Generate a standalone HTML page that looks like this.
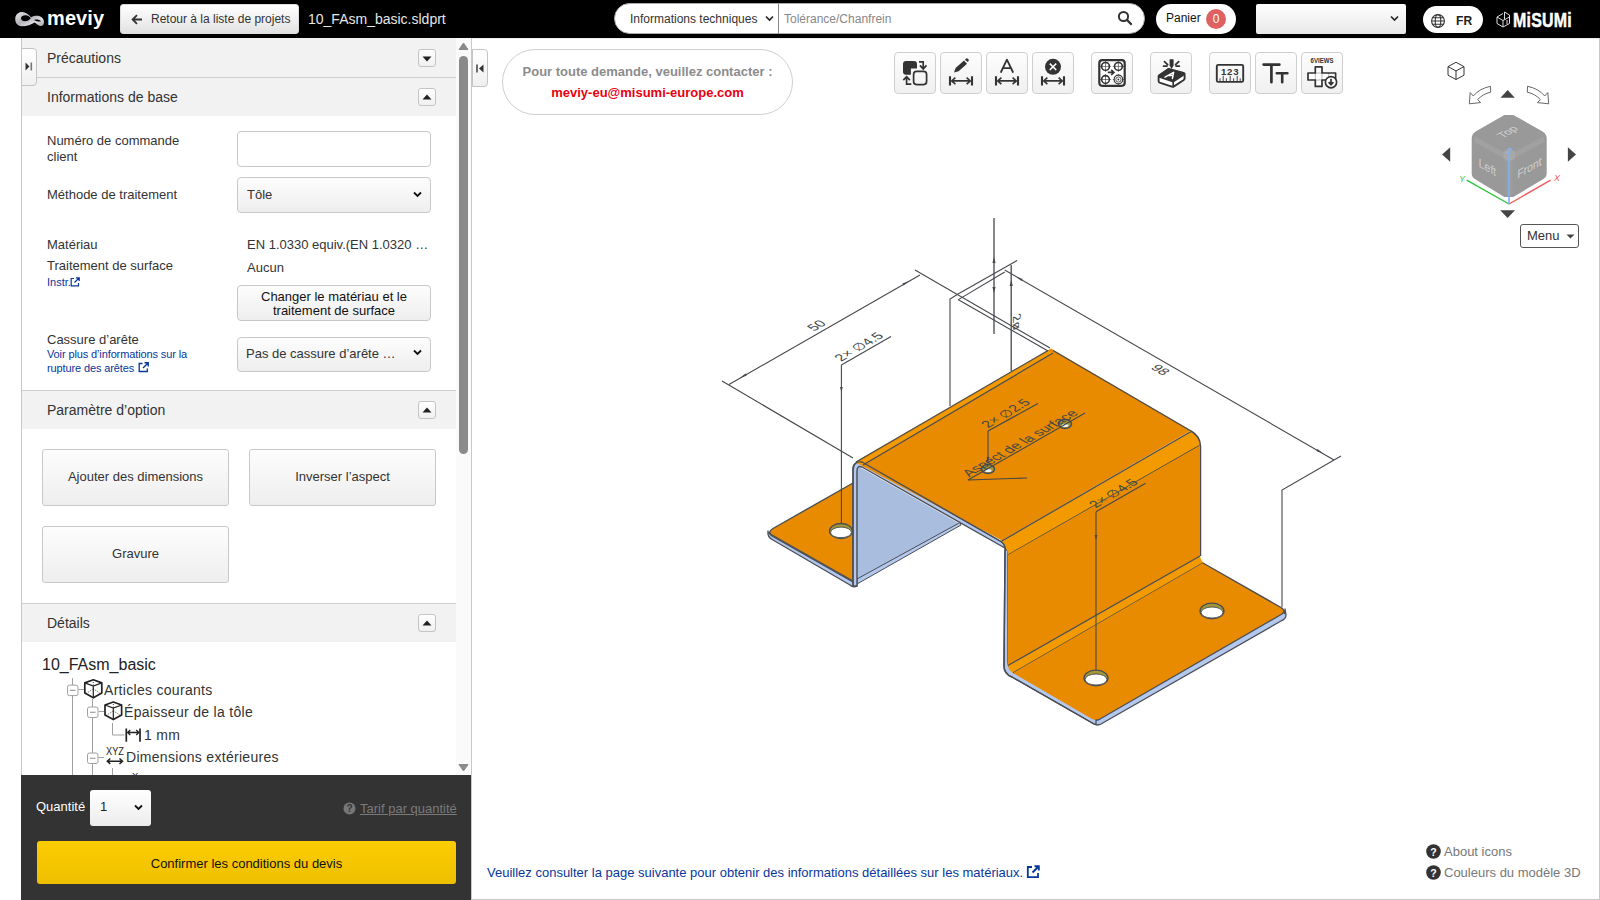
<!DOCTYPE html>
<html lang="fr">
<head>
<meta charset="utf-8">
<title>meviy</title>
<style>
*{box-sizing:border-box;margin:0;padding:0}
html,body{width:1600px;height:900px;overflow:hidden;background:#fff;font-family:"Liberation Sans",sans-serif;color:#333}
.a{position:absolute;white-space:nowrap}
#hdr{position:absolute;left:0;top:0;width:1600px;height:38px;background:#000}
.btn{position:absolute;border:1px solid #c8c8c8;border-radius:3px;background:linear-gradient(#fdfdfd,#eeeeee)}
.sec{position:absolute;left:22px;width:434px;background:#f2f2f2}
.tog{position:absolute;left:418px;width:18px;height:18px;border:1px solid #c4c4c4;border-radius:3px;background:linear-gradient(#ffffff,#f0f0f0)}
.t13{font-size:13px;line-height:16px;margin-top:1px}
.t14{font-size:14px;line-height:16px}
.t12{font-size:12px;line-height:14px}
.t11{font-size:11px;line-height:14px}
.blue{color:#08379c}
.tb{position:absolute;top:52px;width:42px;height:42px;border:1px solid #cfcfcf;border-radius:4px;background:linear-gradient(#fdfdfd,#f0f0f0)}
.tb svg{position:absolute;left:-1px;top:-1px}
</style>
</head>
<body>
<!-- HEADER -->
<div id="hdr">
  <svg class="a" style="left:0;top:0" width="50" height="38" viewBox="0 0 50 38">
    <defs><linearGradient id="lg" x1="0" y1="0" x2="1" y2="1"><stop offset="0" stop-color="#e8e8ec"/><stop offset=".45" stop-color="#b4b2b8"/><stop offset=".7" stop-color="#dcdce2"/><stop offset="1" stop-color="#a8a6ac"/></linearGradient></defs>
    <path fill-rule="evenodd" fill="url(#lg)" d="M15.2 19 C15.2 14.5 18.8 12 22 12 C25.5 12 28.8 14.5 31 17.3 C33 16.2 35 15.8 37 15.8 C41 15.8 44 18.5 44 22 C44 24.6 42.6 26 41 26 C39 26 37 24.2 34.6 22.4 C31 24.4 27 26.2 22 26.2 C18 26.2 15.2 23.5 15.2 19 Z M21 18.3 C21 16.3 23 15.3 25.5 15.3 C28 15.3 29.8 16.8 30.8 18.6 C29 20.3 27.5 21.2 25.2 21.2 C22.8 21.2 21 20.2 21 18.3 Z M34 19.9 C36.8 19.2 39.8 19.6 41 21.4 C39.4 21.9 36.8 21.6 34 19.9 Z"/>
  </svg>
  <div class="a" style="left:47px;top:6px;font-size:20px;line-height:24px;font-weight:700;color:#fff;letter-spacing:0.1px">meviy</div>
  <div class="btn" style="left:120px;top:4px;width:179px;height:30px;border-color:#ddd;border-radius:3px;background:linear-gradient(#ffffff,#e2e2e2)">
    <svg class="a" style="left:10px;top:9px" width="12" height="11" viewBox="0 0 12 11"><path d="M11 5.5H2M6 1.2 1.6 5.5 6 9.8" fill="none" stroke="#333" stroke-width="1.8"/></svg>
    <div class="a t12" style="left:30px;top:7px;color:#333">Retour à la liste de projets</div>
  </div>
  <div class="a" style="left:308px;top:11px;font-size:14px;line-height:16px;color:#e6e6e6">10_FAsm_basic.sldprt</div>
  <!-- search -->
  <div class="a" style="left:614px;top:3px;width:531px;height:31px;background:#fff;border-radius:16px;border:1px solid #aaa"></div>
  <div class="a t12" style="left:630px;top:12px;color:#333">Informations techniques</div>
  <svg class="a" style="left:765px;top:15px" width="9" height="7" viewBox="0 0 9 7"><path d="M1 1.5 4.5 5 8 1.5" fill="none" stroke="#222" stroke-width="1.6"/></svg>
  <div class="a" style="left:778px;top:4px;width:1px;height:30px;background:#888"></div>
  <div class="a t12" style="left:784px;top:12px;color:#888">Tolérance/Chanfrein</div>
  <svg class="a" style="left:1117px;top:10px" width="16" height="16" viewBox="0 0 16 16"><circle cx="6.5" cy="6.5" r="4.6" fill="none" stroke="#333" stroke-width="2"/><path d="M10 10 14 14" stroke="#333" stroke-width="2.4" stroke-linecap="round"/></svg>
  <!-- panier -->
  <div class="a" style="left:1156px;top:4px;width:80px;height:30px;background:#fff;border-radius:15px"></div>
  <div class="a t12" style="left:1166px;top:11px;color:#111">Panier</div>
  <div class="a" style="left:1206px;top:9px;width:20px;height:20px;border-radius:10px;background:#e06162;color:#fff;font-size:12px;line-height:20px;text-align:center">0</div>
  <!-- select -->
  <div class="a" style="left:1256px;top:4px;width:150px;height:30px;border-radius:2px;background:linear-gradient(#ffffff,#e8e8e8)"></div>
  <svg class="a" style="left:1390px;top:15px" width="9" height="7" viewBox="0 0 9 7"><path d="M1 1.5 4.5 5 8 1.5" fill="none" stroke="#222" stroke-width="1.6"/></svg>
  <!-- FR -->
  <div class="a" style="left:1423px;top:6px;width:60px;height:27px;background:#fff;border-radius:14px"></div>
  <svg class="a" style="left:1430px;top:13px" width="16" height="16" viewBox="0 0 16 16"><g fill="none" stroke="#333" stroke-width="1.1"><circle cx="8" cy="8" r="6.4"/><ellipse cx="8" cy="8" rx="2.8" ry="6.4"/><path d="M1.6 8h12.8M2.6 4.8h10.8M2.6 11.2h10.8"/></g></svg>
  <div class="a" style="left:1456px;top:14px;font-size:12px;line-height:14px;font-weight:700;color:#222;letter-spacing:0.2px">FR</div>
  <!-- misumi -->
  <svg class="a" style="left:1496px;top:11px" width="15" height="17" viewBox="0 0 15 17"><g fill="none" stroke="#ddd" stroke-width="1"><path d="M1 6 7 9.5 7 16 1 12.5Z M7 9.5 13.5 6 13.5 12.5 7 16 M1 6 7 2.5 M8.5 1 13.5 4 13.5 6 M8.5 1 8.5 8.5 M11 9 11 13"/></g></svg>
  <div class="a" style="left:1513px;top:8px;font-size:21px;line-height:24px;font-weight:700;color:#fff;transform:scaleX(0.76);transform-origin:0 0;letter-spacing:0.3px;-webkit-text-stroke:0.5px #fff">MiSUMi</div>
</div>

<!-- LEFT PANEL -->
<div class="a" style="left:21px;top:38px;width:1px;height:737px;background:#c8c8c8"></div>
<div class="a" style="left:456px;top:38px;width:15px;height:737px;background:#fafafa"></div>
<div class="a" style="left:471px;top:38px;width:1px;height:862px;background:#c8c8c8"></div>
<!-- scrollbar -->
<svg class="a" style="left:458px;top:42px" width="11" height="8" viewBox="0 0 11 8"><path d="M1 7.5 5.5 1 10 7.5Z" fill="#8a8a8a" stroke="#8a8a8a" stroke-linejoin="round"/></svg>
<div class="a" style="left:459px;top:56px;width:9px;height:398px;border-radius:4.5px;background:#8a8a8a"></div>
<svg class="a" style="left:458px;top:764px" width="11" height="8" viewBox="0 0 11 8"><path d="M1 0.5 5.5 7 10 0.5Z" fill="#8a8a8a" stroke="#8a8a8a" stroke-linejoin="round"/></svg>

<!-- sections -->
<div class="sec" style="top:38px;height:40px;border-bottom:1px solid #cfcfcf"></div>
<div class="a t14" style="left:47px;top:50px;color:#333">Précautions</div>
<div class="tog" style="top:49px"><svg class="a" style="left:3px;top:6px" width="10" height="6" viewBox="0 0 10 6"><path d="M0.5 0.5H9.5L5 5.5Z" fill="#222"/></svg></div>

<div class="sec" style="top:78px;height:38px"></div>
<div class="a t14" style="left:47px;top:89px;color:#333">Informations de base</div>
<div class="tog" style="top:88px"><svg class="a" style="left:3px;top:5px" width="10" height="6" viewBox="0 0 10 6"><path d="M0.5 5.5H9.5L5 0.5Z" fill="#222"/></svg></div>

<div class="a t13" style="left:47px;top:132px;color:#333;line-height:16px">Numéro de commande<br>client</div>
<div class="a" style="left:237px;top:131px;width:194px;height:36px;border:1px solid #c8c8c8;border-radius:4px;background:#fff"></div>

<div class="a t13" style="left:47px;top:186px;color:#333">Méthode de traitement</div>
<div class="btn" style="left:237px;top:177px;width:194px;height:36px;border-radius:4px"></div>
<div class="a t13" style="left:247px;top:186px;color:#333">Tôle</div>
<svg class="a" style="left:413px;top:191px" width="9" height="7" viewBox="0 0 9 7"><path d="M1 1.5 4.5 5 8 1.5" fill="none" stroke="#111" stroke-width="1.8"/></svg>

<div class="a t13" style="left:47px;top:236px;color:#333">Matériau</div>
<div class="a t13" style="left:247px;top:236px;color:#333">EN 1.0330 equiv.(EN 1.0320 …</div>
<div class="a t13" style="left:47px;top:257px;color:#333">Traitement de surface</div>
<div class="a t13" style="left:247px;top:259px;color:#333">Aucun</div>
<div class="a t11 blue" style="left:47px;top:275px">Instr.</div>
<svg class="a" style="left:70px;top:277px" width="10" height="10" viewBox="0 0 10 10"><path d="M4 1.5H1.2V8.8H8.5V6" fill="none" stroke="#08379c" stroke-width="1.2"/><path d="M4.5 5.5 9 1M6 0.8H9.2V4" fill="none" stroke="#08379c" stroke-width="1.3"/></svg>

<div class="btn" style="left:237px;top:285px;width:194px;height:36px;border-radius:4px"></div>
<div class="a t13" style="left:237px;top:289px;width:194px;text-align:center;color:#111;line-height:14px">Changer le matériau et le<br>traitement de surface</div>

<div class="a t13" style="left:47px;top:331px;color:#333">Cassure d’arête</div>
<div class="a t11 blue" style="left:47px;top:347px;line-height:14px;letter-spacing:-0.12px">Voir plus d’informations sur la<br>rupture des arêtes</div>
<svg class="a" style="left:138px;top:362px" width="11" height="11" viewBox="0 0 11 11"><path d="M4.5 1.5H1.2V9.5H9.3V6.5" fill="none" stroke="#08379c" stroke-width="1.3"/><path d="M5 6 9.8 1.2M6.5 0.8H10.2V4.5" fill="none" stroke="#08379c" stroke-width="1.4"/></svg>
<div class="btn" style="left:237px;top:337px;width:194px;height:35px;border-radius:4px"></div>
<div class="a t13" style="left:246px;top:345px;color:#333">Pas de cassure d’arête …</div>
<svg class="a" style="left:413px;top:349px" width="9" height="7" viewBox="0 0 9 7"><path d="M1 1.5 4.5 5 8 1.5" fill="none" stroke="#111" stroke-width="1.8"/></svg>

<div class="sec" style="top:390px;height:39px;border-top:1px solid #cfcfcf"></div>
<div class="a t14" style="left:47px;top:402px;color:#333">Paramètre d’option</div>
<div class="tog" style="top:401px"><svg class="a" style="left:3px;top:5px" width="10" height="6" viewBox="0 0 10 6"><path d="M0.5 5.5H9.5L5 0.5Z" fill="#222"/></svg></div>

<div class="btn" style="left:42px;top:449px;width:187px;height:57px"></div>
<div class="a t13" style="left:42px;top:468px;width:187px;text-align:center;color:#333">Ajouter des dimensions</div>
<div class="btn" style="left:249px;top:449px;width:187px;height:57px"></div>
<div class="a t13" style="left:249px;top:468px;width:187px;text-align:center;color:#333">Inverser l’aspect</div>
<div class="btn" style="left:42px;top:526px;width:187px;height:57px"></div>
<div class="a t13" style="left:42px;top:545px;width:187px;text-align:center;color:#333">Gravure</div>

<div class="sec" style="top:603px;height:39px;border-top:1px solid #cfcfcf"></div>
<div class="a t14" style="left:47px;top:615px;color:#333">Détails</div>
<div class="tog" style="top:614px"><svg class="a" style="left:3px;top:5px" width="10" height="6" viewBox="0 0 10 6"><path d="M0.5 5.5H9.5L5 0.5Z" fill="#222"/></svg></div>

<div class="a" style="left:42px;top:656px;font-size:16px;line-height:18px;color:#222">10_FAsm_basic</div>
<!-- TREE placeholder -->
<!--TREE--><svg class="a" style="left:40px;top:674px" width="300" height="101" viewBox="40 674 300 101">
<path d="M72.5 678 V775 M92.5 699 V775 M112.5 723 V735 H124.5 M112.5 768 V775" fill="none" stroke="#a0a0a0" stroke-width="1"/>
<rect x="67.5" y="685.1" width="10.5" height="10.5" rx="2" fill="#fff" stroke="#a0a0a0" stroke-width="1"/>
<path d="M70 690.4 H75.5" stroke="#a0a0a0" stroke-width="1.2"/>
<path d="M78.5 689.5 H84" stroke="#a0a0a0" stroke-width="1"/>
<rect x="87.5" y="707.0" width="10.5" height="10.5" rx="2" fill="#fff" stroke="#a0a0a0" stroke-width="1"/>
<path d="M90 712.3 H95.5" stroke="#a0a0a0" stroke-width="1.2"/>
<path d="M98.5 711.5 H104" stroke="#a0a0a0" stroke-width="1"/>
<rect x="87.5" y="753.0" width="10.5" height="10.5" rx="2" fill="#fff" stroke="#a0a0a0" stroke-width="1"/>
<path d="M90 758.3 H95.5" stroke="#a0a0a0" stroke-width="1.2"/>
<path d="M98.5 757.5 H104" stroke="#a0a0a0" stroke-width="1"/>
<path d="M93.3 679.8 L101.8 682.92 V693.112 L93.3 697.8000000000001 L84.8 693.112 V682.92 Z" fill="#fff" stroke="#222" stroke-width="1.7" stroke-linejoin="round"/>
<path d="M84.8 682.92 L93.3 686.056 L101.8 682.92 M93.3 686.056 V697.8000000000001" fill="none" stroke="#222" stroke-width="1.2"/>
<path d="M93.3 685.468 V680.568 M93.3 688.8 L86.2 693.504 M93.3 688.8 L100.39999999999999 693.504" fill="none" stroke="#222" stroke-width="0.9" stroke-dasharray="1 1.5"/>
<path d="M113.31400000000001 702.0 L121.628 705.0416 V715.02976 L113.31400000000001 719.6080000000001 L105.0 715.02976 V705.0416 Z" fill="#fff" stroke="#222" stroke-width="1.7" stroke-linejoin="round"/>
<path d="M105.0 705.0416 L113.31400000000001 708.1148800000001 L121.628 705.0416 M113.31400000000001 708.1148800000001 V719.6080000000001" fill="none" stroke="#222" stroke-width="1.2"/>
<path d="M113.31400000000001 707.5386400000001 V702.7366400000001 M113.31400000000001 710.8040000000001 L106.4 715.4139200000001 M113.31400000000001 710.8040000000001 L120.228 715.4139200000001" fill="none" stroke="#222" stroke-width="0.9" stroke-dasharray="1 1.5"/>
<path d="M126.3 728.5 V741.8 M140 728.5 V741.8" stroke="#222" stroke-width="1.7"/>
<path d="M127.5 732.5 H139 M130.3 730 127.6 732.5 130.3 735 M136.2 730 138.9 732.5 136.2 735" fill="none" stroke="#222" stroke-width="1.3"/>
<text x="115" y="755.2" font-family="Liberation Sans" font-size="10" fill="#222" text-anchor="middle" transform="translate(115 0) scale(0.92 1) translate(-115 0)">XYZ</text>
<path d="M107.5 761.2 H122.3 M110.3 758.5 107.3 761.2 110.3 763.9 M119.5 758.5 122.5 761.2 119.5 763.9" fill="none" stroke="#222" stroke-width="1.5"/>
<text x="132" y="779" font-family="Liberation Sans" font-size="9.5" fill="#222">X</text>
</svg>
<div class="a" style="left:104px;top:682px;font-size:14px;line-height:16px;color:#333;letter-spacing:0.3px">Articles courants</div>
<div class="a" style="left:124px;top:704px;font-size:14px;line-height:16px;color:#333;letter-spacing:0.3px">Épaisseur de la tôle</div>
<div class="a" style="left:144px;top:727px;font-size:14px;line-height:16px;color:#333;letter-spacing:0.3px">1 mm</div>
<div class="a" style="left:126px;top:749px;font-size:14px;line-height:16px;color:#333;letter-spacing:0.3px">Dimensions extérieures</div><!--/TREE-->

<!-- collapse tabs -->
<div class="a" style="left:21px;top:48px;width:16px;height:38px;border:1px solid #c4c4c4;border-radius:0 4px 4px 0;background:linear-gradient(#ffffff,#f0f0f0)"></div>
<svg class="a" style="left:25px;top:62px" width="8" height="9" viewBox="0 0 8 9"><path d="M0.5 0.5 4.5 4.5 0.5 8.5Z" fill="#333"/><rect x="5.5" y="0.5" width="1.6" height="8" fill="#777"/></svg>
<div class="a" style="left:472px;top:49px;width:16px;height:38px;border:1px solid #c4c4c4;border-radius:0 4px 4px 0;background:linear-gradient(#ffffff,#f0f0f0)"></div>
<svg class="a" style="left:476px;top:64px" width="8" height="9" viewBox="0 0 8 9"><rect x="0.3" y="0.5" width="1.4" height="8" fill="#333"/><path d="M7.5 0.5 3 4.5 7.5 8.5Z" fill="#333"/></svg>

<!-- FOOTER -->
<div class="a" style="left:21px;top:775px;width:450px;height:125px;background:#333"></div>
<div class="a t13" style="left:36px;top:798px;color:#fff">Quantité</div>
<div class="a" style="left:90px;top:790px;width:61px;height:36px;border-radius:3px;background:linear-gradient(#ffffff,#ececec)"></div>
<div class="a t13" style="left:100px;top:798px;color:#222">1</div>
<svg class="a" style="left:134px;top:804px" width="9" height="7" viewBox="0 0 9 7"><path d="M1 1.5 4.5 5 8 1.5" fill="none" stroke="#111" stroke-width="1.8"/></svg>
<svg class="a" style="left:343px;top:802px" width="13" height="13" viewBox="0 0 13 13"><circle cx="6.5" cy="6.5" r="6" fill="#777"/><text x="6.5" y="10.3" font-family="Liberation Sans" font-weight="700" font-size="10" fill="#333" text-anchor="middle">?</text></svg>
<div class="a t13" style="left:360px;top:800px;color:#7a7a7a;text-decoration:underline">Tarif par quantité</div>
<div class="a" style="left:37px;top:841px;width:419px;height:43px;border-radius:3px;background:linear-gradient(#fccd00,#eebf00)"></div>
<div class="a t13" style="left:37px;top:855px;width:419px;text-align:center;color:#111">Confirmer les conditions du devis</div>

<!-- VIEWER -->
<div class="a" style="left:472px;top:38px;width:1127px;height:1px;background:#ececec"></div>
<div class="a" style="left:1599px;top:38px;width:1px;height:862px;background:#c8c8c8"></div>
<div class="a" style="left:471px;top:899px;width:1129px;height:1px;background:#c8c8c8"></div>

<div class="a" style="left:502px;top:49px;width:291px;height:66px;border:1px solid #cfcfcf;border-radius:33px;background:#fff"></div>
<div class="a t13" style="left:502px;top:63px;width:291px;text-align:center;font-weight:700;color:#8c8c8c">Pour toute demande, veuillez contacter :</div>
<div class="a t13" style="left:502px;top:84px;width:291px;text-align:center;font-weight:700;color:#e8000f">meviy-eu@misumi-europe.com</div>

<!--TOOLBAR--><div class="tb" style="left:894px"><svg width="41" height="41" viewBox="0 0 41 41">
<path d="M12 9 H20 Q23 9 23 12 V16.6 H16.9 V22.7 H12 Q9 22.7 9 19.7 V12 Q9 9 12 9Z" fill="#333"/>
<rect x="19.6" y="19.4" width="13" height="13.2" rx="3" fill="none" stroke="#333" stroke-width="1.7"/>
<path d="M25 9.9 H29.2 V16.5 M25.9 13.4 29.2 16.9 32.5 13.4" fill="none" stroke="#333" stroke-width="1.7"/>
<path d="M17.3 32.1 H12.6 V25 M9.3 28.2 12.6 24.8 15.9 28.2" fill="none" stroke="#333" stroke-width="1.7"/>
</svg></div>
<div class="tb" style="left:940px"><svg width="41" height="41" viewBox="0 0 41 41">
<path d="M14 20.6 L15.6 16 L24 8.6 L27 11.7 L18.6 19.2 Z" fill="#333"/>
<path d="M24.9 7.8 L26.2 6.6 Q27 5.9 27.8 6.7 L28.6 7.5 Q29.3 8.3 28.5 9.1 L27.8 9.9 Z" fill="#333"/>
<path d="M10 24.3 V33.6 M32 24.3 V33.6" stroke="#333" stroke-width="2.1"/>
<path d="M11.5 28.9 H30.5 M15.4 25.6 11.7 28.9 15.4 32.2 M26.6 25.6 30.3 28.9 26.6 32.2" fill="none" stroke="#333" stroke-width="1.6"/></svg></div>
<div class="tb" style="left:986px"><svg width="41" height="41" viewBox="0 0 41 41">
<path d="M15 20 L20.9 7.6 L26.9 20 M17.6 16.2 H24.2" fill="none" stroke="#333" stroke-width="1.8" stroke-linecap="round" stroke-linejoin="round"/>
<path d="M10 24.3 V33.6 M32 24.3 V33.6" stroke="#333" stroke-width="2.1"/>
<path d="M11.5 28.9 H30.5 M15.4 25.6 11.7 28.9 15.4 32.2 M26.6 25.6 30.3 28.9 26.6 32.2" fill="none" stroke="#333" stroke-width="1.6"/></svg></div>
<div class="tb" style="left:1032px"><svg width="41" height="41" viewBox="0 0 41 41">
<circle cx="21" cy="14.8" r="8" fill="#333"/>
<path d="M17.8 11.6 24.2 18 M24.2 11.6 17.8 18" stroke="#fff" stroke-width="1.5"/>
<path d="M10 24.3 V33.6 M32 24.3 V33.6" stroke="#333" stroke-width="2.1"/>
<path d="M11.5 28.9 H30.5 M15.4 25.6 11.7 28.9 15.4 32.2 M26.6 25.6 30.3 28.9 26.6 32.2" fill="none" stroke="#333" stroke-width="1.6"/></svg></div>
<div class="tb" style="left:1091px"><svg width="41" height="41" viewBox="0 0 41 41">
<rect x="8.3" y="8.2" width="25.4" height="25.6" rx="3" fill="#fff" stroke="#333" stroke-width="2.2"/>
<circle cx="14.5" cy="14.4" r="3.9" fill="#fff" stroke="#333" stroke-width="1.6"/><path d="M8.9 14.4H20.1M14.5 8.8V20.0" stroke="#333" stroke-width="0.6"/><circle cx="27.4" cy="14.4" r="3.9" fill="#fff" stroke="#333" stroke-width="1.6"/><path d="M21.799999999999997 14.4H33.0M27.4 8.8V20.0" stroke="#333" stroke-width="0.6"/><circle cx="14.5" cy="27.5" r="3.9" fill="#fff" stroke="#333" stroke-width="1.6"/><path d="M8.9 27.5H20.1M14.5 21.9V33.1" stroke="#333" stroke-width="0.6"/><circle cx="27.4" cy="27.5" r="4.3" fill="#fff" stroke="#333" stroke-width="1.2"/><circle cx="27.4" cy="27.5" r="2.6" fill="none" stroke="#333" stroke-width="0.8"/><circle cx="27.4" cy="27.5" r="0.9" fill="#333"/><path d="M21.799999999999997 27.5H23.099999999999998M31.7 27.5H33.0M27.4 21.9V23.2M27.4 31.8V33.1" stroke="#333" stroke-width="0.6"/>
<path d="M16.8 20.4 H22.6 M20.2 17.9 22.9 20.4 20.2 23" fill="none" stroke="#333" stroke-width="1.7"/>
</svg></div>
<div class="tb" style="left:1150px"><svg width="41" height="41" viewBox="0 0 41 41">
<path d="M9 23.5 L18.5 17 L33.5 21 Q35 21.6 34.6 23 V26.5 Q34.4 27.6 33.4 28.3 L24 34.4 Q23 35 21.8 34.7 L9.6 30.6 Q8.6 30.2 8.6 29 V24.5 Q8.6 23.8 9 23.5Z" fill="#fff" stroke="#333" stroke-width="1.9" stroke-linejoin="round"/>
<path d="M8.8 23.7 L18.5 17 L33.8 21.2 Q34.8 21.8 34 22.6 L24.2 29 Q23 29.6 21.8 29.2 L9.4 25 Q8.4 24.5 8.8 23.7Z" fill="#333" stroke="#333" stroke-width="1.6" stroke-linejoin="round"/>
<path d="M23.2 29.3 V34.5" stroke="#333" stroke-width="1.7"/>
<path d="M15 25.2 L23.6 20.3 L22.4 26.4 M18.6 23.6 L23 23.3" fill="none" stroke="#fff" stroke-width="1.5" stroke-linejoin="round" stroke-linecap="round"/>
<path d="M19.6 7.2 H23.6 V13.5 L21.6 17 L19.6 13.5Z" fill="#333"/>
<path d="M14.5 9.6 L17.6 12.6 M13.6 14.2 H16.8 M28.7 9.6 L25.6 12.6 M29.3 14.2 H26.2" stroke="#333" stroke-width="1.8" stroke-linecap="round"/>
</svg></div>
<div class="tb" style="left:1209px"><svg width="41" height="41" viewBox="0 0 41 41">
<rect x="7.8" y="12.9" width="26.4" height="17" rx="1.5" fill="none" stroke="#333" stroke-width="1.9"/>
<text x="21.2" y="22.8" font-family="Liberation Sans" font-weight="700" font-size="9.6" fill="#333" text-anchor="middle" letter-spacing="0.8">123</text>
<path d="M11 29 V26.3 M14.2 29 V23.8 M17.4 29 V26.3 M21.2 29 V23.8 M24.6 29 V26.3 M28.2 29 V23.8 M31.2 29 V26.3" stroke="#333" stroke-width="0.9"/>
</svg></div>
<div class="tb" style="left:1255px"><svg width="41" height="41" viewBox="0 0 41 41">
<path d="M8.6 12.6 H24.4 M16.4 12.8 V30.2" stroke="#333" stroke-width="2.7" stroke-linecap="round"/>
<path d="M21.8 21.3 H32.4 M27.2 21.5 V30.2" stroke="#333" stroke-width="2.6" stroke-linecap="round"/>
</svg></div>
<div class="tb" style="left:1301px"><svg width="41" height="41" viewBox="0 0 41 41">
<text x="21" y="11.4" font-family="Liberation Sans" font-weight="700" font-size="6.6" fill="#333" text-anchor="middle" transform="translate(21 0) scale(0.92 1) translate(-21 0)">6VIEWS</text>
<path d="M14.3 14.8 H21 V21 H34.6 V28 H21 V34.4 H14.3 V28 H7 V21 H14.3 Z" fill="#fff" stroke="#333" stroke-width="1.7" stroke-linejoin="round"/>
<path d="M14.3 21 V28 M21 21 V28 M14.3 21 H21 M14.3 28 H21 M27.8 21 V28" stroke="#333" stroke-width="0.5" opacity="0.7"/>
<circle cx="30" cy="30.2" r="5.6" fill="#fff" stroke="#333" stroke-width="1.7"/>
<path d="M30 26.8 V32.4 M27.6 30.2 30 32.7 32.4 30.2" fill="none" stroke="#333" stroke-width="1.7"/>
</svg></div><!--/TOOLBAR-->
<!--MODEL--><svg class="a" style="left:0;top:0" width="1600" height="900" viewBox="0 0 1600 900">
<path d="M853 483 L773 528.5 Q767 532 772 536 L853 582 Z" fill="#e98b00"/>
<path d="M768 531 Q767 537 773 540 L850 585 Q853 588 857 586 L857 580 L853 581 L772 535 Q767 532 768 531Z" fill="#b4c8ee" stroke="#4b4e54" stroke-width="1.3" stroke-linejoin="round"/>
<path d="M853 483 L773 528.5 Q767 532 772 536 L853 582" fill="none" stroke="#4b4e54" stroke-width="1.4"/>
<path d="M856 465 L961 524.5 L856 581 Z" fill="#a9bddf"/>
<path d="M857 579 L960 522.5 L961 525 L857 584 Z" fill="#b4c8ee" stroke="#4b4e54" stroke-width="1" stroke-linejoin="round"/>
<path d="M853 586 L853 470 Q853 461 862 462 L1001 541.5 Q1006 545 1005 551 L1004 666 Q1004 674 1012 677 L1094 724 Q1097 725.5 1100 724 L1100 719 L1096 719 L1013 671 Q1008 668 1008 662 L1008 553 Q1008 550 1004 547.5 L862 467 Q857 465 857 471 L857 586 Z" fill="#b4c8ee" stroke="#4b4e54" stroke-width="1.4" stroke-linejoin="round"/>
<path d="M855 462 L1051 348.5 L1191 430.5 L1002 540.5 Z" fill="#e98b00"/>
<path d="M857 463 L1049 351 L1054 353.5 L863 465 Z" fill="#f39a00"/>
<path d="M856 462 L1048 350.5" stroke="#4b4e54" stroke-width="1.2" fill="none"/>
<path d="M863 465 L1053 353" stroke="#4b4e54" stroke-width="1.3" fill="none"/>
<path d="M1053 350.5 L1191 431" stroke="#4b4e54" stroke-width="1.4" fill="none"/>
<path d="M1001 541.5 L1191 431 Q1200 436 1200 445 L1200 446 L1008 555 Q1007 546 1001 541.5Z" fill="#f39a00"/>
<path d="M1001 541.5 L1191 431.5" stroke="#4b4e54" stroke-width="1.3" fill="none"/>
<path d="M1008 555 L1199.5 445.5" stroke="#4b4e54" stroke-width="1.3" fill="none"/>
<path d="M1191 431 Q1200 436 1200.5 446 L1200.5 556" stroke="#4b4e54" stroke-width="1.5" fill="none"/>
<path d="M1008 555 L1200 445.5 L1200 556 L1008 666 Z" fill="#e98b00"/>
<path d="M1008 666 L1200 556 Q1201 561 1204 563 L1013 673 Q1009 671 1008 666Z" fill="#f39a00"/>
<path d="M1008 665.5 L1200 556" stroke="#4b4e54" stroke-width="1.3" fill="none"/>
<path d="M1013 673 L1203 563" stroke="#4b4e54" stroke-width="1.3" fill="none"/>
<path d="M1013 673 L1203 563 L1281 607.5 Q1286 611 1282 614 L1100 719 Q1096 721 1092 719 Z" fill="#e98b00"/>
<path d="M1100 719 L1282 614 Q1286 611 1285 609 L1286 615 Q1286 619 1281 621 L1101 724 Q1098 725.5 1096 724.5 L1096 720 Q1098 720.5 1100 719Z" fill="#b4c8ee" stroke="#4b4e54" stroke-width="1.3" stroke-linejoin="round"/>
<path d="M1203 563 L1281 607.5 Q1286 611 1284 614" stroke="#4b4e54" stroke-width="1.4" fill="none"/>
<path d="M853 586 L853 470 Q853 461 862 462 L1001 541.5 Q1006 545 1005 551 L1004 666 Q1004 674 1012 677 L1094 724" fill="none" stroke="#4b4e54" stroke-width="1.4" stroke-linejoin="round"/>
<ellipse cx="841" cy="531" rx="11.5" ry="7.5" fill="#a39634" stroke="#4b4e54" stroke-width="1.3"/>
<ellipse cx="841" cy="532.40" rx="10.40" ry="5.30" fill="#fff" stroke="#4b4e54" stroke-width="0.9"/>
<ellipse cx="1212" cy="611" rx="12" ry="7.8" fill="#a39634" stroke="#4b4e54" stroke-width="1.3"/>
<ellipse cx="1212" cy="612.50" rx="10.90" ry="5.50" fill="#fff" stroke="#4b4e54" stroke-width="0.9"/>
<ellipse cx="1096" cy="678" rx="12" ry="7.8" fill="#a39634" stroke="#4b4e54" stroke-width="1.3"/>
<ellipse cx="1096" cy="679.50" rx="10.90" ry="5.50" fill="#fff" stroke="#4b4e54" stroke-width="0.9"/>
<ellipse cx="988" cy="469" rx="6.5" ry="4.5" fill="#a39634" stroke="#4b4e54" stroke-width="1.6"/>
<ellipse cx="988" cy="470.5" rx="3.5" ry="1.6" fill="#eef" />
<ellipse cx="1065" cy="424" rx="6.5" ry="4.5" fill="#a39634" stroke="#4b4e54" stroke-width="1.6"/>
<ellipse cx="1065" cy="425.5" rx="3.5" ry="1.6" fill="#eef" />
<path d="M722 381 L853 458" stroke="#45484c" stroke-width="1.1" fill="none"/>
<path d="M729 384.5 L920 275" stroke="#45484c" stroke-width="1.1" fill="none"/>
<path d="M915 270 L1050 348" stroke="#45484c" stroke-width="1.1" fill="none"/>
<path d="M994 218 L994 334" stroke="#45484c" stroke-width="1.3" fill="none"/>
<path d="M957.6 294.2 L1017.1 260.4" stroke="#45484c" stroke-width="1.1" fill="none"/>
<path d="M958.4 299.6 L1004.7 272" stroke="#45484c" stroke-width="1.1" fill="none"/>
<path d="M958 299.6 L1048 351" stroke="#45484c" stroke-width="1.1" fill="none"/>
<path d="M1004.7 270 L1334 460" stroke="#45484c" stroke-width="1.1" fill="none"/>
<path d="M1341 456 L1282 490 L1282 607" stroke="#45484c" stroke-width="1.1" fill="none"/>
<path d="M1011.2 265 L1011.2 371" stroke="#45484c" stroke-width="1.3" fill="none"/>
<path d="M950 406 L950 299 L957.6 294.2" stroke="#45484c" stroke-width="1.1" fill="none"/>
<path d="M841.4 365 L891 336.5" stroke="#45484c" stroke-width="1.1" fill="none"/>
<path d="M841.4 365 L841.4 524" stroke="#45484c" stroke-width="1.1" fill="none"/>
<path d="M988 431 L1038 403.5" stroke="#45484c" stroke-width="1.1" fill="none"/>
<path d="M988 431 L988 463" stroke="#45484c" stroke-width="1.1" fill="none"/>
<path d="M968 480 L1085 413" stroke="#45484c" stroke-width="1.1" fill="none"/>
<path d="M968 480 L1027 478" stroke="#45484c" stroke-width="1.1" fill="none"/>
<path d="M1096 511.7 L1145.6 483.3" stroke="#45484c" stroke-width="1.1" fill="none"/>
<path d="M1096 511.7 L1096 670" stroke="#45484c" stroke-width="1.1" fill="none"/>
<path d="M740 378 L745.4 373.4 L746.7 375.6Z" fill="#45484c"/>
<path d="M909 281 L903.6 285.6 L902.3 283.4Z" fill="#45484c"/>
<path d="M1016 276.5 L1022.7 278.9 L1021.4 281.1Z" fill="#45484c"/>
<path d="M1323 453.5 L1316.3 451.1 L1317.6 448.9Z" fill="#45484c"/>
<path d="M841.4 392 L840.0 387.0 L842.8 387.0Z" fill="#45484c"/>
<path d="M988 462 L986.6 457.0 L989.4 457.0Z" fill="#45484c"/>
<path d="M1096 540 L1094.6 535.0 L1097.4 535.0Z" fill="#45484c"/>
<path d="M994 257 L995.6 263.0 L992.4 263.0Z" fill="#45484c"/>
<path d="M994 293 L992.4 287.0 L995.6 287.0Z" fill="#45484c"/>
<path d="M1011.2 280 L1012.8 286.0 L1009.6 286.0Z" fill="#45484c"/>
<text transform="matrix(0.866,-0.5,0.866,0.5,820.5,327.8)" font-family="Liberation Sans" font-size="13.5" fill="#45484c" text-anchor="middle">50</text>
<text transform="matrix(0.866,-0.5,0.866,0.5,862.9,349.1)" font-family="Liberation Sans" font-size="13.6" fill="#45484c" text-anchor="middle">2× ∅4.5</text>
<text transform="matrix(0.866,-0.5,0.866,0.5,1009.7,415.6)" font-family="Liberation Sans" font-size="13.6" fill="#45484c" text-anchor="middle">2× ∅2.5</text>
<text transform="matrix(0.866,-0.5,0.866,0.5,1024.1,445.6)" font-family="Liberation Sans" font-size="14" fill="#45484c" text-anchor="middle">Aspect de la surface</text>
<text transform="matrix(0.866,-0.5,0.866,0.5,1117.4,495.6)" font-family="Liberation Sans" font-size="13.6" fill="#45484c" text-anchor="middle">2× ∅4.5</text>
<text transform="matrix(0.866,0.5,-0.866,0.5,1156.5,372)" font-family="Liberation Sans" font-size="13.5" fill="#45484c" text-anchor="middle">98</text>
<text transform="matrix(0,1,-0.866,0.5,1013,324)" font-family="Liberation Sans" font-size="13" fill="#45484c" text-anchor="middle">2ø</text>
</svg><!--/MODEL-->
<!--CUBE--><svg class="a" style="left:1430px;top:55px" width="170" height="200" viewBox="1430 55 170 200">
<path d="M1456 62.3 L1464 66.6 V75.2 L1456 79.5 L1448 75.2 V66.6 Z M1448 66.6 L1456 70.9 L1464 66.6 M1456 70.9 V79.5" fill="none" stroke="#333" stroke-width="1" stroke-linejoin="round"/>
<path d="M1490.5 86.3 Q1479.5 88.5 1473.3 96 L1470.2 92.6 L1469.3 103.8 L1480.6 102.6 L1477.6 99.6 Q1483 93.8 1490.7 92.2 Z" fill="#fff" stroke="#555" stroke-width="0.9" stroke-linejoin="round"/>
<path d="M1527.5 86.3 Q1538.5 88.5 1544.7 96 L1547.8 92.6 L1548.7 103.8 L1537.4 102.6 L1540.4 99.6 Q1535 93.8 1527.3 92.2 Z" fill="#fff" stroke="#555" stroke-width="0.9" stroke-linejoin="round"/>
<path d="M1500.5 97.8 L1507.7 90 L1514.8 97.8Z" fill="#444"/>
<path d="M1442.1 154.5 L1450.2 147.3 V161.8Z" fill="#444"/>
<path d="M1576 154.5 L1567.9 147.3 V161.8Z" fill="#444"/>
<path d="M1500.2 210.2 H1515 L1507.6 217.9Z" fill="#444"/>
<path d="M1504.4 114.9 H1513.3 L1542.6 131.5 Q1546.7 134 1546.7 138.5 V173.6 Q1546.7 177.5 1542.6 179.6 L1513.3 196.9 H1504.4 L1475.6 179.6 Q1471.7 177.5 1471.7 173.6 V138.5 Q1471.7 134 1475.6 131.5 Z" fill="#999"/>
<path d="M1475 136.5 L1505 153 L1513 153 L1543 136.5 L1545 141.5 L1514 158.5 L1504 158.5 L1473.5 141.5Z" fill="#a1a1a1"/>
<path d="M1505.5 158 V196 H1512.5 V158Z" fill="#9d9d9d"/>
<path d="M1503.5 151.5 L1509.2 148.5 L1515 151.5 L1515 158.5 L1509.2 161.5 L1503.5 158.5Z" fill="#a8a8a8"/>
<text transform="matrix(0.866,-0.5,0.866,0.5,1511.4,134.5)" font-family="Liberation Sans" font-size="11.5" fill="#7e7e7e" text-anchor="middle">Top</text>
<text transform="matrix(0.866,-0.5,0.866,0.5,1511,134)" font-family="Liberation Sans" font-size="11.5" fill="#cdcdcd" stroke="#cdcdcd" stroke-width="0.25" text-anchor="middle">Top</text>
<text transform="matrix(0.866,0.5,0,1,1487.9,172.0)" font-family="Liberation Sans" font-size="12" fill="#7e7e7e" text-anchor="middle">Left</text>
<text transform="matrix(0.866,0.5,0,1,1487.5,171.5)" font-family="Liberation Sans" font-size="12" fill="#cdcdcd" stroke="#cdcdcd" stroke-width="0.25" text-anchor="middle">Left</text>
<text transform="matrix(0.866,-0.5,0,1,1529.9,172.5)" font-family="Liberation Sans" font-size="12" fill="#7e7e7e" text-anchor="middle">Front</text>
<text transform="matrix(0.866,-0.5,0,1,1529.5,172)" font-family="Liberation Sans" font-size="12" fill="#cdcdcd" stroke="#cdcdcd" stroke-width="0.25" text-anchor="middle">Front</text>
<path d="M1509 204 L1466.7 180.2" stroke="#2dc43c" stroke-width="1.4"/>
<path d="M1509 204 L1550.6 180.2" stroke="#f25c5c" stroke-width="1.4"/>
<path d="M1509 204 V156" stroke="#7db3f5" stroke-width="1.6"/>
<text x="1462" y="182" font-family="Liberation Sans" font-size="9" font-style="italic" fill="#2dc43c" text-anchor="middle">Y</text>
<text x="1557" y="181" font-family="Liberation Sans" font-size="9" font-style="italic" fill="#f25c5c" text-anchor="middle">X</text>
<text x="1509.5" y="153.5" font-family="Liberation Sans" font-size="9" font-style="italic" font-weight="700" fill="#7db3f5" text-anchor="middle">Z</text>
</svg>
<div class="a" style="left:1520px;top:224px;width:59px;height:24px;border:1px solid #555;border-radius:3px;background:#fff"></div>
<div class="a t13" style="left:1527px;top:227px;color:#333">Menu</div>
<svg class="a" style="left:1566px;top:234px" width="9" height="5" viewBox="0 0 9 5"><path d="M0.5 0.5H8.5L4.5 4.5Z" fill="#444"/></svg><!--/CUBE-->

<div class="a t13 blue" style="left:487px;top:864px">Veuillez consulter la page suivante pour obtenir des informations détaillées sur les matériaux.</div>
<svg class="a" style="left:1026px;top:865px" width="14" height="14" viewBox="0 0 14 14"><path d="M6 2H1.8V12.2H12V8" fill="none" stroke="#08379c" stroke-width="1.8"/><path d="M6.5 7.5 12.5 1.5M8.5 1.2H12.8V5.5" fill="none" stroke="#08379c" stroke-width="1.9"/></svg>

<svg class="a" style="left:1426px;top:844px" width="15" height="15" viewBox="0 0 15 15"><circle cx="7.5" cy="7.5" r="7.3" fill="#333"/><text x="7.5" y="11.5" font-family="Liberation Sans" font-weight="700" font-size="10.5" fill="#fff" text-anchor="middle">?</text></svg>
<div class="a t13" style="left:1444px;top:843px;color:#777">About icons</div>
<svg class="a" style="left:1426px;top:865px" width="15" height="15" viewBox="0 0 15 15"><circle cx="7.5" cy="7.5" r="7.3" fill="#333"/><text x="7.5" y="11.5" font-family="Liberation Sans" font-weight="700" font-size="10.5" fill="#fff" text-anchor="middle">?</text></svg>
<div class="a t13" style="left:1444px;top:864px;color:#777">Couleurs du modèle 3D</div>
</body>
</html>
